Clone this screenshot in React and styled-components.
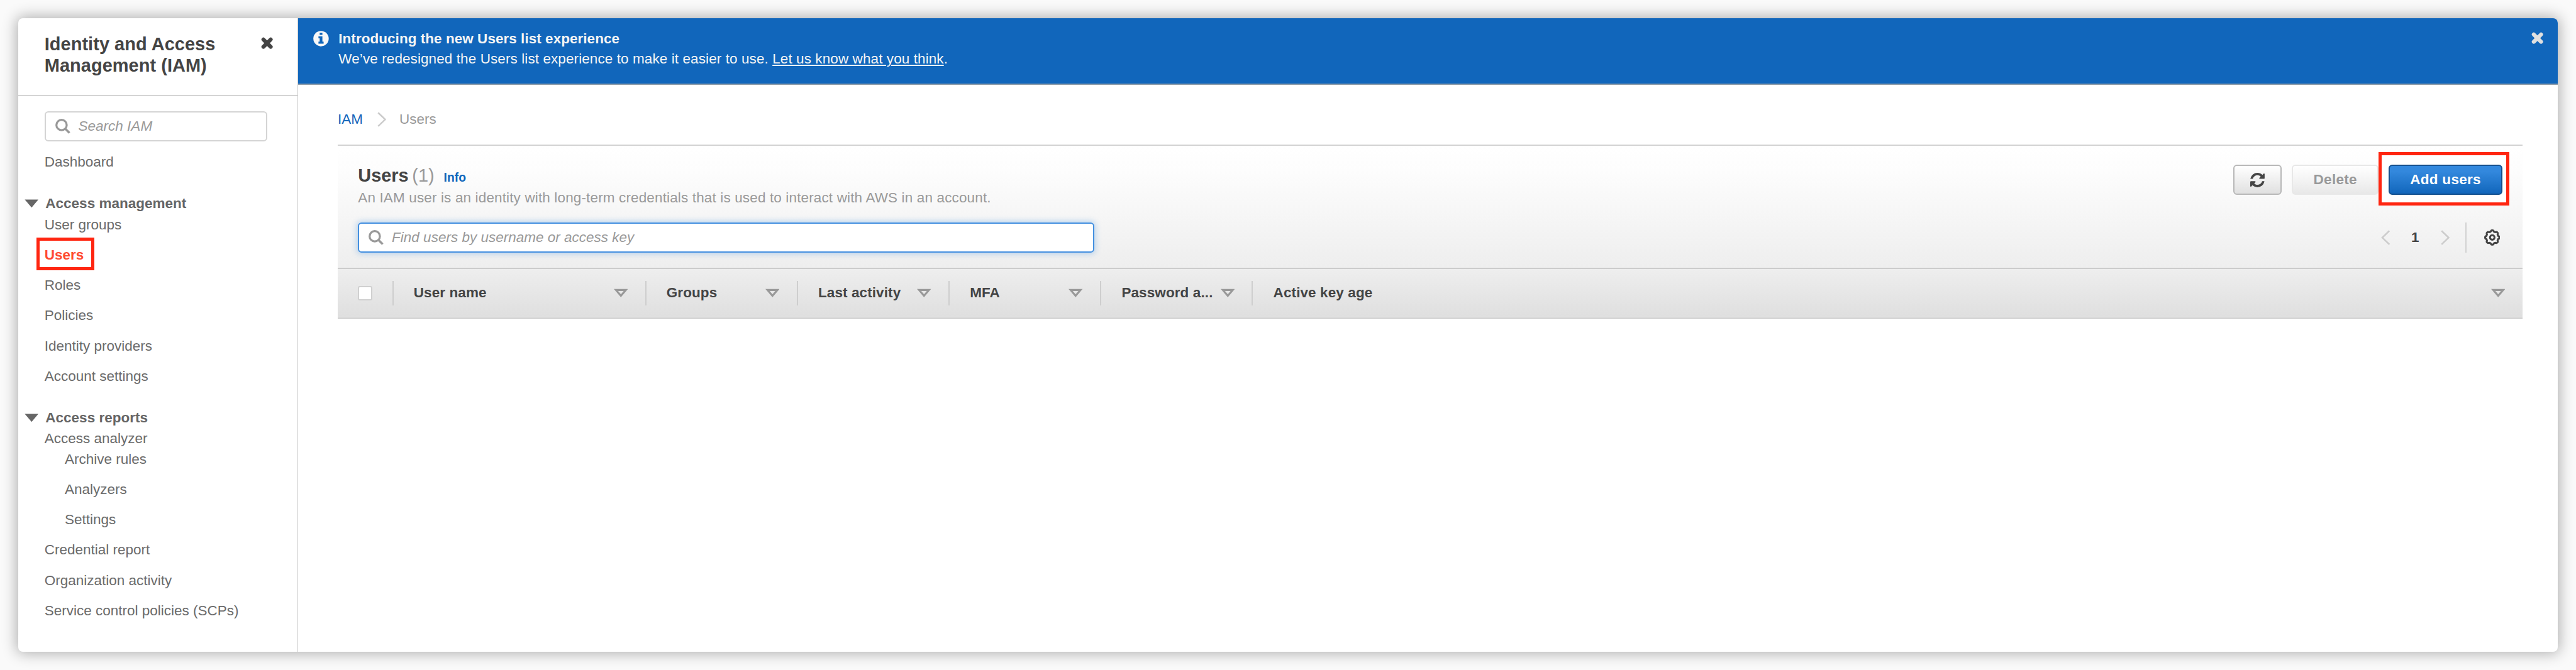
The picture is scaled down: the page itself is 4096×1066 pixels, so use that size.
import React from "react";
import styled, { createGlobalStyle, css } from "styled-components";

// Design units: the layout is drawn on a 5094-unit wide board.
const u = (n) => `${+(n * 0.80408).toFixed(3)}px`;

const Global = createGlobalStyle`
  *, *::before, *::after { box-sizing: border-box; }
  html, body { margin: 0; padding: 0; background: #fafafa; overflow: hidden; }
  body { font-family: "Liberation Sans", Helvetica, Arial, sans-serif; font-size: ${u(28)}; line-height: ${u(40)}; color: #444; }
  a { color: inherit; }
  svg { display: block; flex: none; }
`;

const Stage = styled.div`
  width: 4096px;
  height: 1066px;
  padding: ${u(36)};
  background: #fafafa;
`;

const Window = styled.div`
  display: flex;
  width: ${u(5022)};
  height: ${u(1254)};
  border-radius: ${u(9)};
  overflow: hidden;
  background: #fff;
  box-shadow: 0 0 ${u(29)} ${u(2)} rgba(0, 0, 0, 0.32);
`;

const Sidebar = styled.aside`
  flex: none;
  width: ${u(553.5)};
  border-right: 1px solid #ccc;
`;

const SideHeader = styled.header`
  display: flex;
  justify-content: space-between;
  align-items: flex-start;
  height: ${u(154)};
  padding: ${u(31)} ${u(48.5)} 0 ${u(52)};
  border-bottom: 2px solid #d4d4d4;
`;

const SideTitle = styled.h1`
  margin: 0;
  width: ${u(380)};
  font-size: ${u(36)};
  line-height: ${u(42)};
  font-weight: bold;
  letter-spacing: 0.05px;
  color: #444;
`;

const CloseButton = styled.button`
  margin-top: ${(p) => u(p.$top)};
  padding: 0;
  border: 0;
  background: none;
  color: ${(p) => p.$color};
`;

const SearchBox = styled.label`
  display: flex;
  align-items: center;
  width: ${(p) => u(p.$width)};
  height: ${u(60)};
  padding-left: ${u(18.5)};
  gap: ${u(16)};
  border: 2px solid #d4d4d4;
  border-radius: ${u(7)};
  background: #fff;
  color: #999;
  font-style: italic;
  ${(p) =>
    p.$focused &&
    css`
      border-color: #4490e0;
      box-shadow: 0 0 ${u(12)} ${u(2)} rgba(51, 136, 221, 0.3);
    `}
`;

const SideBody = styled.div`
  padding: ${u(30)} 0 0 ${u(52)};
`;

const NavList = styled.ul`
  list-style: none;
  margin: ${(p) => u(p.$top || 0)} 0 0;
  padding: 0 0 0 ${(p) => u(p.$indent || 0)};
`;

const NavItem = styled.li`
  position: relative;
  width: fit-content;
  height: ${(p) => u(p.$tight ? 40 : 60)};
  color: #6b6b6b;
  white-space: nowrap;
  ${(p) =>
    p.$active &&
    css`
      color: #ff4a30;
      font-weight: bold;
      &::after {
        content: "";
        position: absolute;
        left: ${u(-15.5)};
        top: ${u(-15)};
        width: ${u(114)};
        height: ${u(65)};
        border: 5px solid #ff2510;
      }
    `}
`;

const NavHeading = styled.h2`
  display: flex;
  align-items: center;
  gap: ${u(14)};
  margin: ${(p) => u(p.$top)} 0 ${u(2)} ${u(-40)};
  height: ${u(40)};
  font-size: ${u(28)};
  font-weight: bold;
  color: #666;
`;

const Main = styled.main`
  flex: 1;
  min-width: 0;
`;

const Banner = styled.section`
  display: flex;
  align-items: flex-start;
  height: ${u(132)};
  padding: ${u(20)} ${u(28)} 0 ${u(29.5)};
  background: #1166bb;
  border-bottom: 2px solid #8f9ca8;
  color: #f5f5f5;
`;

const BannerIcon = styled.span`
  margin: ${u(4.5)} ${u(19.5)} 0 0;
`;

const BannerText = styled.div`
  flex: 1;
  padding-top: ${u(0.7)};
`;

const Line = styled.div`
  height: ${u(40)};
  white-space: nowrap;
  letter-spacing: ${(p) => (p.$bold ? "0.04px" : "0.09px")};
  font-weight: ${(p) => (p.$bold ? "bold" : "normal")};
`;

const FeedbackLink = styled.a`
  text-decoration: underline;
  text-decoration-thickness: 2px;
  text-underline-offset: 2px;
`;

const Content = styled.div`
  padding: ${u(48)} ${u(70)} 0 ${u(78.5)};
`;

const Breadcrumb = styled.nav`
  display: flex;
  align-items: center;
  height: ${u(40)};
  margin-bottom: ${u(30)};
  color: #999;
`;

const Crumb = styled.a`
  color: #1166bb;
  margin-right: ${u(28)};
`;

const CrumbHere = styled.span`
  margin-left: ${u(26)};
`;

const Panel = styled.section`
  height: ${u(344)};
  border-top: 2px solid #d2d2d2;
  border-bottom: 2px solid #c8c8c8;
`;

const PanelHead = styled.header`
  height: ${u(241.5)};
  padding: ${u(37.5)} ${u(40)} 0 ${u(40)};
  background: linear-gradient(#ffffff, #fdfdfd 20%, #eeeeee);
`;

const HeadRow = styled.div`
  display: flex;
  justify-content: space-between;
  align-items: flex-start;
  height: ${(p) => u(p.$height)};
`;

const PanelTitle = styled.h2`
  display: flex;
  align-items: baseline;
  margin: ${u(1)} 0 0;
  height: ${u(42)};
  font-size: ${u(36)};
  line-height: ${u(42)};
  color: #444;
`;

const Count = styled.span`
  margin-left: ${u(7)};
  font-weight: normal;
  color: #999;
`;

const InfoLink = styled.a`
  margin-left: ${u(18.5)};
  font-size: ${u(24)};
  color: #1166bb;
`;

const Description = styled.p`
  margin: 0;
  line-height: ${u(44)};
  white-space: nowrap;
  letter-spacing: 0.14px;
  color: #999;
`;

const Actions = styled.div`
  display: flex;
  gap: ${u(20)};
`;

const Button = styled.button`
  display: flex;
  align-items: center;
  justify-content: center;
  width: ${(p) => u(p.$width)};
  height: ${u(60)};
  padding: 0;
  border: 2px solid #b8b8b8;
  border-radius: ${u(7)};
  background: linear-gradient(#ffffff, #e0e0e0);
  font: bold ${u(28)} / ${u(40)} "Liberation Sans", Arial, sans-serif;
  letter-spacing: 0.3px;
  color: #444;
  ${(p) =>
    p.$kind === "disabled" &&
    css`
      color: #999;
      border-color: #e8e8e8;
      background: linear-gradient(#ffffff, #e8e8e8);
    `}
  ${(p) =>
    p.$kind === "primary" &&
    css`
      position: relative;
      color: #fff;
      border-color: #14508e;
      background: linear-gradient(#3388dd 20%, #1166bb);
    `}
`;

const Highlight = styled.div`
  position: relative;
  &::before {
    content: "";
    position: absolute;
    left: ${u(-20)};
    top: ${u(-25.5)};
    width: ${u(258)};
    height: ${u(106)};
    border: 5px solid #ff2510;
    background: #fff;
  }
`;

const Pager = styled.div`
  display: flex;
  align-items: center;
  height: ${u(60)};
  padding-right: ${u(4)};
`;

const PageNumber = styled.span`
  width: ${u(100)};
  text-align: center;
  font-weight: bold;
  color: #444;
`;

const PagerDivider = styled.span`
  width: 2px;
  height: 100%;
  margin: 0 ${u(34)} 0 ${u(31.5)};
  background: #d2d2d2;
`;

const TableHead = styled.div`
  display: flex;
  align-items: center;
  height: ${u(97.5)};
  border-top: 2px solid #ccc;
  background: linear-gradient(#eeeeee, #dfdfdf);
`;

const Cell = styled.div`
  display: flex;
  align-items: center;
  justify-content: space-between;
  flex: ${(p) => (p.$width ? "none" : "1")};
  width: ${(p) => (p.$width ? u(p.$width) : "auto")};
  height: ${u(48)};
  padding: 0 ${u(34)} 0 ${u(40)};
  border-right: ${(p) => (p.$width ? "2px solid #cecece" : "0")};
  font-weight: bold;
  letter-spacing: 0.1px;
  white-space: nowrap;
  color: #444;
`;

const Checkbox = styled.span`
  width: ${u(28)};
  height: ${u(28)};
  border: 2px solid #d0d0d0;
  border-radius: ${u(4)};
  background: #fff;
`;

const Svg = ({ w, h, box, children }) => (
  <svg width={w * 0.80408} height={h * 0.80408} viewBox={box || `0 0 ${w} ${h}`} fill="none">
    {children}
  </svg>
);

const CloseIcon = () => (
  <Svg w={24} h={24}>
    <path d="M4.8 4.8 19.2 19.2M19.2 4.8 4.8 19.2" stroke="currentColor" strokeWidth="7.8" strokeLinecap="round" />
  </Svg>
);

const SearchIcon = () => (
  <Svg w={30} h={30}>
    <circle cx="12.3" cy="12.3" r="10.2" stroke="#999" strokeWidth="4" />
    <path d="M19.5 19.5 28 28" stroke="#999" strokeWidth="4.4" />
  </Svg>
);

const InfoIcon = () => (
  <Svg w={31} h={31}>
    <circle cx="15.5" cy="15.5" r="15.2" fill="#f8f8f8" />
    <path d="M12.8 3.6h5.4v4.6h-5.4zM10.4 11h7.8v10.4h2.4v4H10.4v-4h2.4v-6.4h-2.4z" fill="#1166bb" />
  </Svg>
);

const RefreshIcon = () => (
  <Svg w={28.5} h={28.5} box="128 128 1536 1536">
    <path
      fill="#444"
      d="M1639 1056q0 5-1 7-64 268-268 434.500t-478 166.500q-146 0-282.500-55t-243.500-157l-129 129q-19 19-45 19t-45-19-19-45v-448q0-26 19-45t45-19h448q26 0 45 19t19 45-19 45l-137 137q71 66 161 102t187 36q134 0 250-65t186-179q11-17 53-117 8-23 30-23h192q13 0 22.500 9.500t9.500 22.500zm25-800v448q0 26-19 45t-45 19h-448q-26 0-45-19t-19-45 19-45l138-138q-148-137-349-137-134 0-250 65t-186 179q-11 17-53 117-8 23-30 23h-199q-13 0-22.500-9.500t-9.500-22.500v-7q65-268 270-434.500t480-166.500q146 0 284 55.500t245 156.500l130-129q19-19 45-19t45 19 19 45z"
    />
  </Svg>
);

const gearPath = (() => {
  const pts = [];
  for (let i = 0; i <= 96; i++) {
    const a = (i / 96) * Math.PI * 2;
    const r = 13 + 1.1 * Math.tanh(2.2 * Math.cos(8 * a));
    pts.push(`${(16 + r * Math.sin(a)).toFixed(2)} ${(16 - r * Math.cos(a)).toFixed(2)}`);
  }
  return `M${pts.join("L")}Z`;
})();

const GearIcon = () => (
  <Svg w={32} h={32}>
    <path d={gearPath} stroke="#444" strokeWidth="3.8" />
    <circle cx="16" cy="16" r="4.5" stroke="#444" strokeWidth="3.7" />
  </Svg>
);

const Chevron = ({ dir }) => (
  <Svg w={18} h={30}>
    <path d={dir === "left" ? "M16.500 1.500 2.500 15 16.500 28.500" : "M1.500 1.500 15.500 15 1.500 28.500"} stroke="#ccc" strokeWidth="3.2" />
  </Svg>
);

const SortIcon = () => (
  <Svg w={28} h={18}>
    <path d="M0 1h28L14 17.500zM8.500 5 14 11.500 19.500 5z" fill="#999" fillRule="evenodd" />
  </Svg>
);

const CaretIcon = () => (
  <Svg w={28} h={17}>
    <path d="M0.500 0.500h27L14 16.500z" fill="#666" />
  </Svg>
);

const accessManagement = ["User groups", "Users", "Roles", "Policies", "Identity providers", "Account settings"];
const analyzerItems = ["Archive rules", "Analyzers", "Settings"];
const reportItems = ["Credential report", "Organization activity", "Service control policies (SCPs)"];
const columns = [
  { label: "User name", width: 500 },
  { label: "Groups", width: 300 },
  { label: "Last activity", width: 300 },
  { label: "MFA", width: 300 },
  { label: "Password a...", width: 300 },
  { label: "Active key age" },
];

export default function App() {
  return (
    <Stage>
      <Global />
      <Window>
        <Sidebar>
          <SideHeader>
            <SideTitle>Identity and Access Management (IAM)</SideTitle>
            <CloseButton $top={7} $color="#444" aria-label="Close navigation">
              <CloseIcon />
            </CloseButton>
          </SideHeader>
          <SideBody>
            <SearchBox $width={440}>
              <SearchIcon />
              Search IAM
            </SearchBox>
            <NavList $top={21}>
              <NavItem $tight>Dashboard</NavItem>
            </NavList>
            <NavHeading $top={42}>
              <CaretIcon />
              Access management
            </NavHeading>
            <NavList>
              {accessManagement.map((t) => (
                <NavItem key={t} $active={t === "Users"}>
                  {t}
                </NavItem>
              ))}
            </NavList>
            <NavHeading $top={22}>
              <CaretIcon />
              Access reports
            </NavHeading>
            <NavList>
              <NavItem $tight>Access analyzer</NavItem>
            </NavList>
            <NavList $indent={40}>
              {analyzerItems.map((t) => (
                <NavItem key={t}>{t}</NavItem>
              ))}
            </NavList>
            <NavList>
              {reportItems.map((t) => (
                <NavItem key={t}>{t}</NavItem>
              ))}
            </NavList>
          </SideBody>
        </Sidebar>
        <Main>
          <Banner>
            <BannerIcon>
              <InfoIcon />
            </BannerIcon>
            <BannerText>
              <Line $bold>Introducing the new Users list experience</Line>
              <Line>
                We’ve redesigned the Users list experience to make it easier to use.{" "}
                <FeedbackLink>Let us know what you think</FeedbackLink>.
              </Line>
            </BannerText>
            <CloseButton $top={8} $color="#e0e0e0" aria-label="Dismiss">
              <CloseIcon />
            </CloseButton>
          </Banner>
          <Content>
            <Breadcrumb>
              <Crumb>IAM</Crumb>
              <Chevron dir="right" />
              <CrumbHere>Users</CrumbHere>
            </Breadcrumb>
            <Panel>
              <PanelHead>
                <HeadRow $height={114}>
                  <div>
                    <PanelTitle>
                      Users <Count>(1)</Count>
                      <InfoLink>Info</InfoLink>
                    </PanelTitle>
                    <Description>
                      An IAM user is an identity with long-term credentials that is used to interact with AWS in an account.
                    </Description>
                  </div>
                  <Actions>
                    <Button $width={96} aria-label="Refresh">
                      <RefreshIcon />
                    </Button>
                    <Button $width={172} $kind="disabled">
                      Delete
                    </Button>
                    <Highlight>
                      <Button $width={224} $kind="primary">
                        Add users
                      </Button>
                    </Highlight>
                  </Actions>
                </HeadRow>
                <HeadRow $height={60}>
                  <SearchBox $width={1456} $focused>
                    <SearchIcon />
                    Find users by username or access key
                  </SearchBox>
                  <Pager>
                    <Chevron dir="left" />
                    <PageNumber>1</PageNumber>
                    <Chevron dir="right" />
                    <PagerDivider />
                    <GearIcon />
                  </Pager>
                </HeadRow>
              </PanelHead>
              <TableHead>
                <Cell $width={110}>
                  <Checkbox />
                </Cell>
                {columns.map((c) => (
                  <Cell key={c.label} $width={c.width}>
                    {c.label}
                    <SortIcon />
                  </Cell>
                ))}
              </TableHead>
            </Panel>
          </Content>
        </Main>
      </Window>
    </Stage>
  );
}
